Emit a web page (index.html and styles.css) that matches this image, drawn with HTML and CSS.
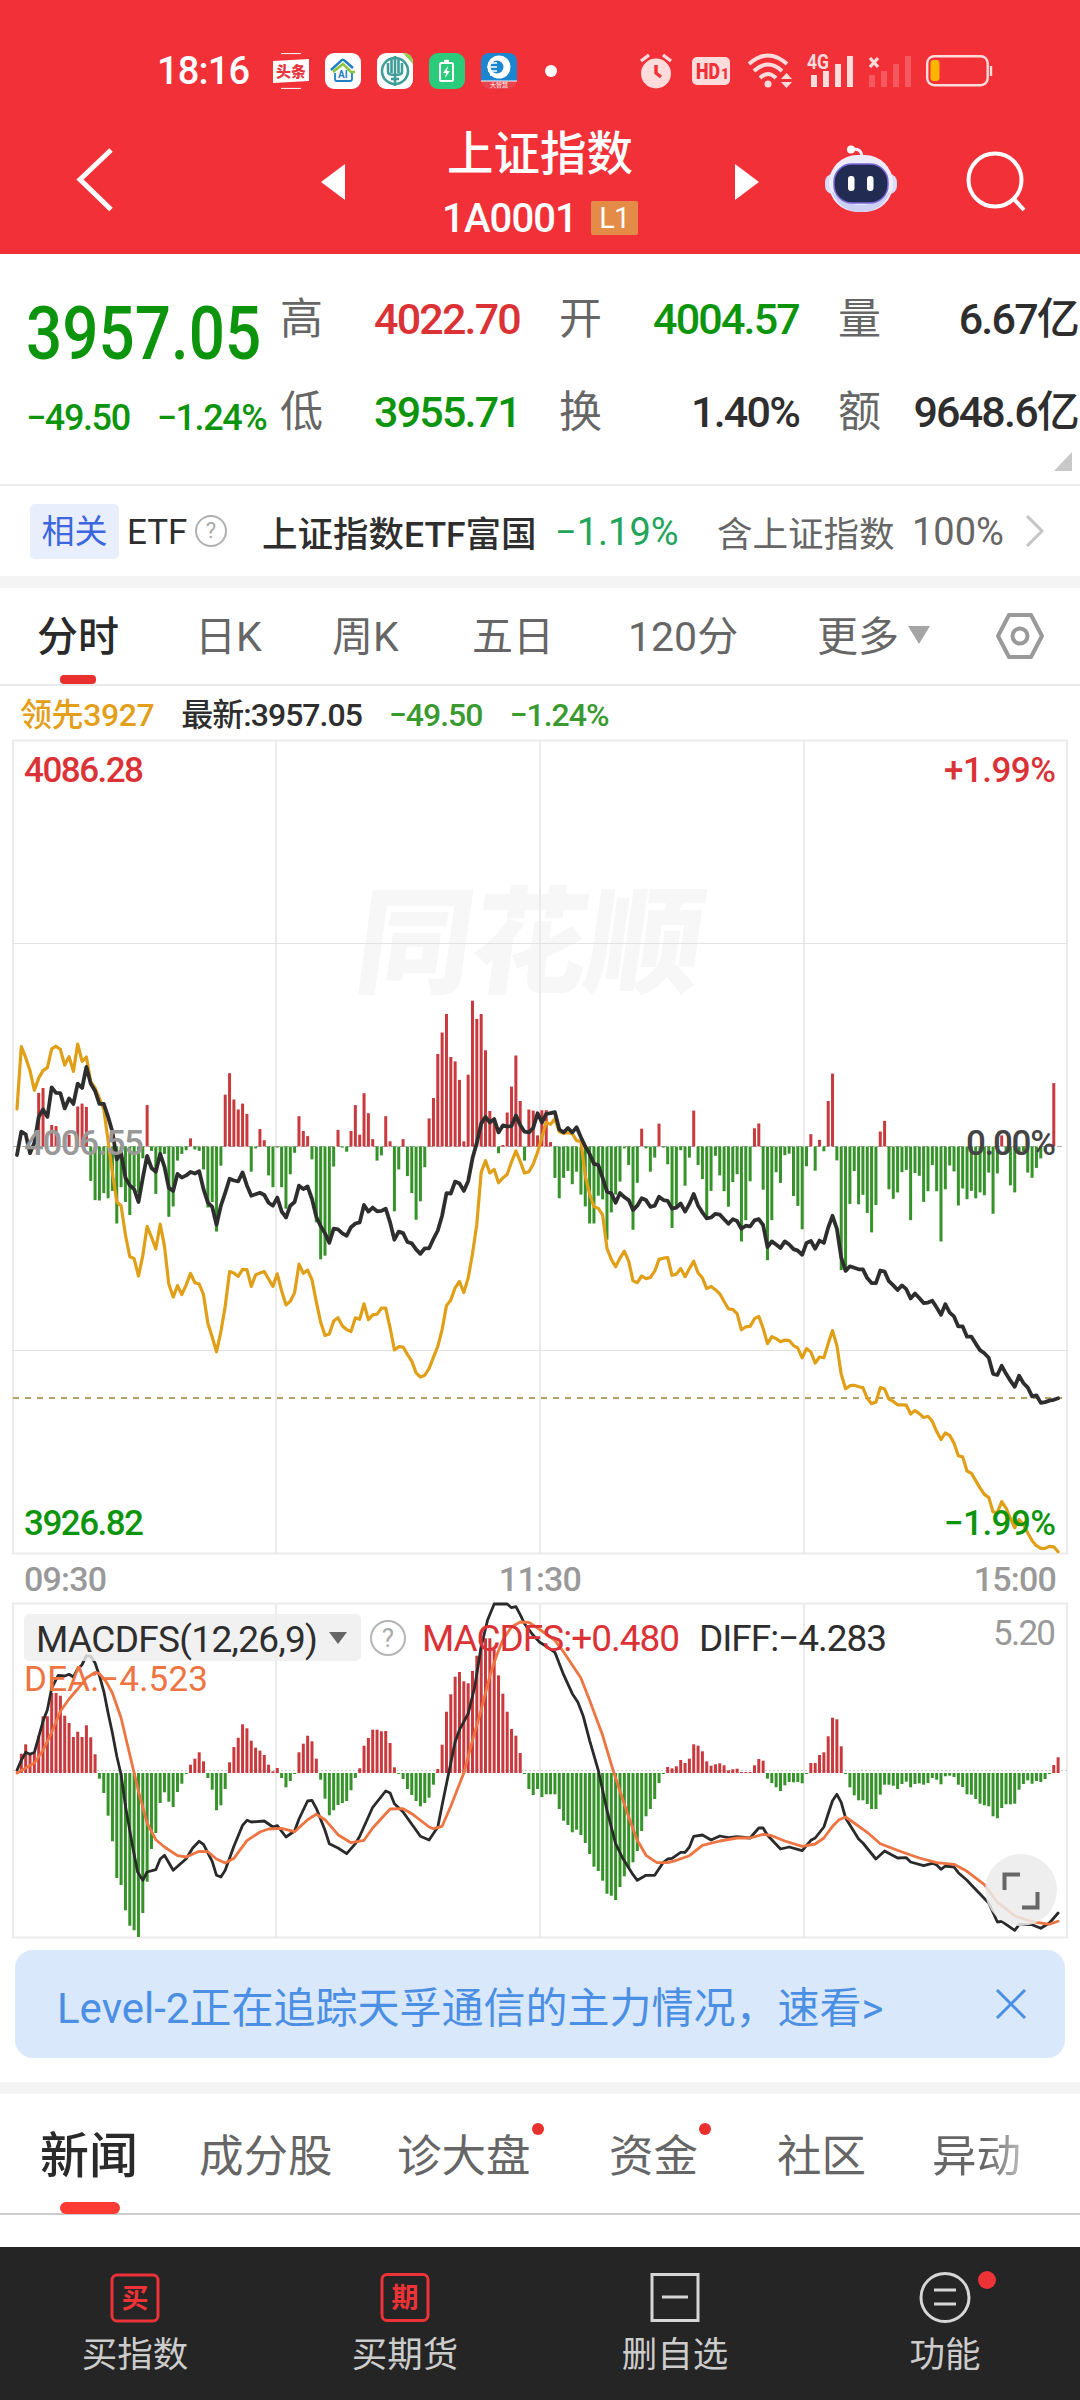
FILE: index.html
```html
<!DOCTYPE html>
<html lang="zh-CN">
<head>
  <meta charset="utf-8">
  <title>上证指数</title>
  <link rel="stylesheet" href="styles.css">
</head>
<body>
  <header class="top">
    <div class="status-bar">
      <span class="clock">18:16</span>
      <div class="app-icons">
        <svg width="36" height="36" viewBox="0 0 36 36"><path d="M8 .6H28M8 35.4H28" stroke="#fff" stroke-width="1"/><path d="M0 8L36 6V28L0 30Z" fill="#fff"/><text x="3" y="24" class="toutiao">头条</text></svg>
        <svg width="36" height="36" viewBox="0 0 36 36"><rect width="36" height="36" rx="9" fill="#fff"/><path d="M6 17L17 7Q18 6 20 8L28 15" fill="none" stroke="#1f7fc4" stroke-width="2.4"/><path d="M8 19L18 11L26 19H30" fill="none" stroke="#8cc63f" stroke-width="2.6"/><path d="M10 20V26Q10 28 12 28H25Q27 28 27 26V20" fill="none" stroke="#1f7fc4" stroke-width="1.8"/><text x="13" y="25" class="ai">AI</text></svg>
        <svg width="36" height="36" viewBox="0 0 36 36"><rect width="36" height="36" rx="9" fill="#fff"/><path d="M26 0Q36 0 36 11Z" fill="#8ccf4d"/><circle cx="18" cy="18" r="13" fill="none" stroke="#3f9f98" stroke-width="2.6"/><path d="M18 3V33M11 10V19Q11 22 18 22Q25 22 25 19V10M14.5 6V20M21.500 6V20M14 26H22" fill="none" stroke="#3f9f98" stroke-width="2.6"/></svg>
        <svg width="36" height="36" viewBox="0 0 36 36"><rect width="36" height="36" rx="9" fill="#2bcb7c"/><rect x="11" y="10" width="13" height="18" rx="1.500" fill="none" stroke="#fff" stroke-width="2"/><path d="M15 8H20" stroke="#fff" stroke-width="2.400"/><path d="M19 13L14 20H17L16 25L21 18H18Z" fill="#fff"/></svg>
        <svg width="36" height="36" viewBox="0 0 36 36"><rect width="36" height="36" rx="9" fill="#e8444c"/><path d="M0 28V9Q0 0 9 0H27Q36 0 36 9V28Z" fill="#1b86cf"/><path d="M0 28H36" stroke="#fff" stroke-width="1"/><circle cx="18" cy="14" r="11.500" fill="#fff"/><circle cx="16" cy="14" r="6.500" fill="#1b86cf"/><path d="M7 10H16M6 14H16M7 18H16M9 22H17" stroke="#fff" stroke-width="1.600"/><text x="9" y="34" class="tiny">大智慧</text></svg>
      </div>
      <i class="more-dot"></i>
      <div class="sys-icons">
        <svg width="32" height="36" viewBox="0 0 32 36" fill="none" stroke="#ffdcdc"><circle cx="16" cy="20.500" r="15" fill="#ffdcdc" stroke="none"/><path d="M1 8L9 2M31 8L23 2" stroke-width="3.400"/><path d="M16 12V20L21 24" stroke="#f13038" stroke-width="3.400"/></svg>
        <svg class="hd" width="38" height="28" viewBox="0 0 38 28"><rect width="38" height="28" rx="5" fill="#ffdcdc"/><text x="4" y="22" textLength="24" lengthAdjust="spacingAndGlyphs">HD</text><text x="29" y="22" class="hd-sub">1</text></svg>
        <svg class="wifi" width="46" height="36" viewBox="0 0 46 36" fill="none" stroke="#ffdcdc" stroke-width="4"><path d="M2 11Q21 -6 40 11M7 18Q21 5 35 18M13 25Q21 17 29 25"/><circle cx="21" cy="31" r="3.500" fill="#ffdcdc" stroke="none"/><path d="M34 26L39.500 20L45 26ZM34 29L39.500 35L45 29Z" fill="#ffdcdc" stroke="none"/></svg>
        <svg class="sig" width="47" height="36" viewBox="0 0 47 36" fill="#ffdcdc"><text x="0" y="16" textLength="22" lengthAdjust="spacingAndGlyphs" class="net">4G</text><rect x="4" y="22" width="6" height="12"/><rect x="16" y="18" width="6" height="16"/><rect x="28" y="11" width="6" height="23"/><rect x="40" y="3" width="6" height="31"/></svg>
        <svg class="sig2" width="44" height="36" viewBox="0 0 44 36"><path d="M2 5L10 14M10 5L2 14" stroke="#ffdcdc" stroke-width="3.200"/><g fill="#f5595f"><rect x="1" y="22" width="6" height="12"/><rect x="13" y="18" width="6" height="16"/><rect x="25" y="11" width="6" height="23"/><rect x="37" y="3" width="6" height="31"/></g></svg>
        <svg class="bat" width="67" height="32" viewBox="0 0 67 32"><rect x="1.200" y="1.200" width="60.500" height="29" rx="7" fill="none" stroke="#ffdcdc" stroke-width="2.400"/><path d="M65 11V21" stroke="#ffdcdc" stroke-width="2.400"/><rect x="4.500" y="5" width="9" height="21" rx="3" fill="#ffb400"/></svg>
      </div>
    </div>
    <div class="nav">
      <svg class="back" width="38" height="64" viewBox="0 0 38 64" fill="none" stroke="#fff" stroke-width="5"><path d="M35 2L4 31.500L35 61.500"/></svg>
      <svg width="24" height="36" viewBox="0 0 24 36"><path d="M24 0V36L0 18Z" fill="#fff"/></svg>
      <div class="title">
        <h1>上证指数</h1>
        <p>1A0001<span class="level">L1</span></p>
      </div>
      <svg width="24" height="36" viewBox="0 0 24 36"><path d="M0 0V36L24 18Z" fill="#fff"/></svg>
      <svg class="robot" width="72" height="68" viewBox="0 0 72 68">
        <path d="M26 5Q37 2 37 13" fill="none" stroke="#f4eefb" stroke-width="3"/><circle cx="26" cy="4.500" r="4" fill="#fff"/>
        <rect x="0" y="29" width="72" height="20" rx="8" fill="#d9dcfb"/>
        <rect x="4" y="10" width="64" height="57" rx="28" fill="#eeecfb"/>
        <path d="M6 45Q14 67 36 67T66 45Q54 60 36 60T6 45Z" fill="#ccd0f5"/>
        <rect x="9" y="19" width="54" height="39" rx="18" fill="#222c52" stroke="#7b68d8" stroke-width="1.500"/>
        <rect x="23" y="31" width="6.500" height="15" rx="3" fill="#fff"/><rect x="42" y="31" width="6.500" height="15" rx="3" fill="#fff"/>
      </svg>
      <svg class="search" width="62" height="62" viewBox="0 0 62 62" fill="none" stroke="#fff" stroke-width="4"><circle cx="29" cy="29" r="26.500"/><path d="M47 47L58 59"/></svg>
    </div>
  </header>

  <section class="quote">
    <div class="quote-main down">
      <strong>3957.05</strong>
      <p><span>−49.50</span><span>−1.24%</span></p>
    </div>
    <dl>
      <div><dt>高</dt><dd class="up">4022.70</dd></div>
      <div><dt>开</dt><dd class="down">4004.57</dd></div>
      <div><dt>量</dt><dd>6.67亿</dd></div>
      <div><dt>低</dt><dd class="down">3955.71</dd></div>
      <div><dt>换</dt><dd>1.40%</dd></div>
      <div><dt>额</dt><dd>9648.6亿</dd></div>
    </dl>
    <i class="corner"></i>
  </section>

  <section class="etf">
    <span class="tag">相关</span>
    <span class="etf-label">ETF</span>
    <i class="help">?</i>
    <span class="etf-name">上证指数ETF富国</span>
    <span class="etf-chg">−1.19%</span>
    <span class="etf-note">含上证指数</span>
    <span class="etf-pct">100%</span>
    <svg width="20" height="32" viewBox="0 0 20 32" fill="none" stroke="#c4c4c4" stroke-width="3"><path d="M2 1L17 16L2 31"/></svg>
  </section>

  <nav class="periods">
    <a class="active">分时</a>
    <a>日K</a>
    <a>周K</a>
    <a>五日</a>
    <a>120分</a>
    <a class="more">更多<i></i></a>
    <svg width="50" height="48" viewBox="0 0 50 48" fill="none" stroke="#999" stroke-width="4"><path d="M14 3H36L47 24L36 45H14L3 24Z" stroke-linejoin="round"/><circle cx="25" cy="24" r="7.500"/></svg>
  </nav>

  <div class="latest">
    <span class="lead">领先3927</span>
    <span>最新:3957.05</span>
    <span class="down2">−49.50</span>
    <span class="down2">−1.24%</span>
  </div>

  <svg id="trend" class="chart" width="1080" height="815" viewBox="0 0 1080 815">
    <text class="watermark" x="356" y="244" textLength="346" transform="skewX(-8) translate(30 0)">同花顺</text>
    <path class="grid" d="M13 .5H1067V813.500H13ZM276 .5V813.500M540 .5V813.500M804 .5V813.500"/>
    <path class="grid thin" d="M13 203.500H1067M13 610.500H1067"/>
    <path d="M13 406.500H1062" stroke="#aaa" stroke-dasharray="6 3"/>
    <path d="M13 658H1062" stroke="#b5a06a" stroke-width="2" stroke-dasharray="6 6"/>
    <g class="bars"></g>
    <g class="lines"></g>
    <text x="24" y="42" textLength="120" class="t up">4086.28</text>
    <text x="1056" y="42" textLength="112" class="t up end">+1.99%</text>
    <text x="24" y="415" textLength="120" class="t mid">4006.55</text>
    <text x="1056" y="415" textLength="90" class="t zero end">0.00%</text>
    <text x="24" y="795" textLength="120" class="t down">3926.82</text>
    <text x="1056" y="795" textLength="112" class="t down end">−1.99%</text>
  </svg>

  <div class="times"><span>09:30</span><span>11:30</span><span>15:00</span></div>

  <div class="macd">
    <svg id="macd" class="chart" width="1080" height="336" viewBox="0 0 1080 336">
      <path class="grid" d="M13 .5H1067V334.500H13ZM276 .5V334.500M540 .5V334.500M804 .5V334.500"/>
      <path d="M13 167.500H1067" stroke="#ccc" stroke-dasharray="2 2"/>
      <g class="bars"></g>
      <g class="lines"></g>
      <rect x="24" y="11" width="337" height="47" rx="5" fill="#eee" fill-opacity=".82"/>
      <text x="36" y="49" textLength="282" class="t ind">MACDFS(12,26,9)</text>
      <path d="M329 29H347L338 41Z" fill="#666"/>
      <circle cx="388" cy="35" r="17" fill="none" stroke="#b5b5b5" stroke-width="2"/>
      <text x="388" y="44" class="q">?</text>
      <text x="422" y="48" textLength="258" class="t macd-up">MACDFS:+0.480</text>
      <text x="699" y="48" textLength="188" class="t ind">DIFF:−4.283</text>
      <text x="1056" y="42" textLength="63" class="t gray end">5.20</text>
      <text x="24" y="88" textLength="184" class="t dea">DEA:−4.523</text>
      <circle cx="1021" cy="287" r="36" fill="#ebebeb" fill-opacity=".85"/>
      <path d="M1004.500 287V271.500H1020M1037.500 289V304.500H1022" fill="none" stroke="#666" stroke-width="4"/>
    </svg>
  </div>

  <div class="banner">
    <span>Level-2正在追踪天孚通信的主力情况，速看&gt;</span>
    <svg width="32" height="32" viewBox="0 0 32 32" stroke="#4a8fe4" stroke-width="3"><path d="M2 2L30 30M30 2L2 30"/></svg>
  </div>

  <nav class="news-tabs">
    <a class="active">新闻</a>
    <a>成分股</a>
    <a class="dot">诊大盘</a>
    <a class="dot">资金</a>
    <a>社区</a>
    <a class="fade">异动</a>
  </nav>

  <footer class="actions">
    <a>
      <svg width="50" height="50" viewBox="0 0 50 50"><rect x="2" y="2" width="46" height="46" rx="5" fill="none" stroke="#ee3338" stroke-width="3"/><text x="25" y="35" class="glyph">买</text></svg>
      <span>买指数</span>
    </a>
    <a>
      <svg width="50" height="50" viewBox="0 0 50 50"><rect x="2" y="1.500" width="46" height="46" rx="5" fill="none" stroke="#ee3338" stroke-width="3"/><text x="25" y="34" class="glyph">期</text></svg>
      <span>买期货</span>
    </a>
    <a>
      <svg width="50" height="50" viewBox="0 0 50 50" fill="none" stroke="#d6d6d6" stroke-width="3"><rect x="2" y="1.500" width="46" height="46"/><path d="M12 24H38"/></svg>
      <span>删自选</span>
    </a>
    <a class="badge">
      <svg width="52" height="52" viewBox="0 0 52 52" fill="none" stroke="#d6d6d6" stroke-width="3"><circle cx="26" cy="25.500" r="24"/><path d="M15 18H37M15 32H37"/></svg>
      <span>功能</span>
    </a>
  </footer>

  <script src="charts.js"></script>
</body>
</html>
```
FILE: styles.css
```css
* {
  box-sizing: border-box;
}

body {
  width: 1080px;
  height: 2400px;
  margin: 0;
  display: flex;
  flex-direction: column;
  overflow: hidden;
  background: #fff;
  color: #2e2e2e;
  font-family: Roboto, "Noto Sans CJK SC", sans-serif;
}

h1, p, dl, dd {
  margin: 0;
}

svg {
  display: block;
  flex: none;
  overflow: visible;
}

.up { color: #db3236; fill: #db3236; }
.down { color: #0c940c; fill: #0c940c; }
.down2 { color: #3a9a30; }

/* header */
.top {
  height: 254px;
  background: #f13038;
  color: #fff;
}

.status-bar {
  display: flex;
  align-items: center;
  height: 142px;
  padding: 0 87px 0 157px;
}

.clock {
  width: 117px;
  font-size: 38px;
  font-weight: 500;
  letter-spacing: -.8px;
}

.app-icons {
  display: flex;
  gap: 16px;
}

.more-dot {
  width: 12px;
  height: 12px;
  margin-left: 28px;
  border-radius: 50%;
  background: #fff;
}

.sys-icons {
  display: flex;
  align-items: center;
  margin-left: 83px;
}

.hd { margin-left: 20px; }
.wifi { margin-left: 17px; }
.sig { margin-left: 14px; }
.sig2 { margin-left: 14px; }
.bat { margin-left: 14px; }

.hd text { font-size: 22px; font-weight: 900; fill: #f13038; }
.hd .hd-sub { font-size: 14px; }
.net { font-size: 20px; font-weight: 700; }
.toutiao { font-size: 15px; font-weight: 900; fill: #e8343c; }
.ai { font-size: 10px; font-weight: 700; fill: #1f7fc4; }
.tiny { font-size: 6px; fill: #fff; }

.nav {
  display: flex;
  align-items: center;
  height: 80px;
  padding-left: 76px;
}

.back {
  margin-right: 207px;
  margin-top: -4px;
}

.title {
  width: 390px;
  padding-top: 7px;
  text-align: center;
}

.title h1 {
  font-size: 46.500px;
  font-weight: 500;
  line-height: 65px;
}

.title p {
  display: flex;
  align-items: center;
  justify-content: center;
  gap: 14px;
  font-size: 40px;
  font-weight: 500;
  line-height: 63px;
  letter-spacing: -.9px;
}

.level {
  width: 47px;
  height: 34px;
  border-radius: 2px;
  background: #e48b47;
  font-size: 29px;
  font-weight: 400;
  line-height: 34px;
}

.robot { margin-left: 66px; margin-top: -7px; }
.search { margin-left: 69px; }

/* quote */
.quote {
  position: relative;
  display: flex;
  height: 232px;
  padding: 19px 1px 0 26px;
  border-bottom: 2px solid #ececec;
}

.quote-main {
  width: 254px;
}

.quote-main strong {
  display: block;
  width: 274px;
  font-size: 75px;
  font-weight: 500;
  line-height: 120px;
  transform: scaleX(.85);
  transform-origin: left;
}

.quote-main p {
  display: flex;
  gap: 27px;
  font-size: 36px;
  font-weight: 500;
  line-height: 50px;
  letter-spacing: -1.400px;
  white-space: nowrap;
}

.quote dl {
  display: grid;
  grid-template-columns: repeat(3, 240px);
  grid-auto-rows: 93px;
  column-gap: 39px;
}

.quote dl div {
  display: flex;
  justify-content: space-between;
  font-size: 43px;
  line-height: 93px;
  white-space: nowrap;
}

.quote dt {
  color: #666;
}

.quote dd {
  font-weight: 500;
  letter-spacing: -1.800px;
}

.corner {
  position: absolute;
  right: 8px;
  bottom: 13px;
  border-left: 18px solid transparent;
  border-bottom: 19px solid #c8c8c8;
}

/* related etf */
.etf {
  display: flex;
  align-items: center;
  height: 90px;
  padding-left: 30px;
  font-size: 35.500px;
  white-space: nowrap;
}

.tag {
  width: 89px;
  height: 55px;
  margin-right: 8px;
  border-radius: 5px;
  background: #e8eefc;
  color: #3c66de;
  font-size: 33px;
  line-height: 56px;
  text-align: center;
}

.etf-label {
  width: 68px;
  padding-top: 2px;
  font-size: 35px;
}

.help {
  width: 32px;
  height: 32px;
  margin-right: 35px;
  border: 2px solid #b0b0b0;
  border-radius: 50%;
  color: #aaa;
  font-size: 22px;
  font-style: normal;
  line-height: 28px;
  text-align: center;
}

.etf-name { width: 293px; font-weight: 500; }
.etf-chg { width: 162px; padding-top: 2px; color: #22a55b; font-size: 38px; }
.etf-note { width: 195px; color: #666; }
.etf-pct { width: 113px; padding-top: 2px; color: #666; font-size: 38px; }

/* period tabs */
.periods {
  display: flex;
  align-items: center;
  height: 110px;
  padding-left: 37px;
  border-top: 12px solid #f4f4f4;
  border-bottom: 2px solid #e8e8e8;
  color: #666;
  font-size: 41px;
  white-space: nowrap;
}

.periods a {
  position: relative;
  height: 96px;
  line-height: 99px;
}

.periods a:nth-child(1) { width: 158px; }
.periods a:nth-child(2) { width: 137px; }
.periods a:nth-child(3) { width: 140px; }
.periods a:nth-child(4) { width: 156px; }
.periods a:nth-child(5) { width: 189px; }
.periods a:nth-child(6) { width: 178px; }

.periods .active {
  color: #2a2a2a;
  font-weight: 500;
}

.periods .active::after {
  content: "";
  position: absolute;
  left: 23px;
  bottom: 0;
  width: 36px;
  height: 9px;
  border-radius: 4px;
  background: #e8302f;
}

.more i {
  display: inline-block;
  margin: 0 0 7px 9px;
  border: 11px solid transparent;
  border-top: 18px solid #a5a5a5;
  border-bottom: 0;
}

.latest {
  display: flex;
  height: 54px;
  padding-left: 20px;
  gap: 27px;
  font-size: 32px;
  font-weight: 500;
  line-height: 58px;
  letter-spacing: -.4px;
}

.latest span {
  letter-spacing: -1px;
}

.latest .lead {
  color: #e39f1a;
  letter-spacing: -.4px;
}

/* charts */
.grid { fill: none; stroke: #ebebeb; stroke-width: 2; }
.thin { stroke: #e2e2e2; stroke-width: 1; }
.line { fill: none; stroke-linejoin: round; stroke-linecap: round; }
.t { font-size: 35px; font-weight: 500; }
.end { text-anchor: end; }
.mid { fill: #999; }
.gray { fill: #999; font-weight: 400; }
.zero { fill: #444; }
.ind { fill: #2e2e2e; font-size: 37px; font-weight: 400; }
.macd-up { fill: #db3236; font-size: 37px; font-weight: 400; }
.dea { fill: #ee7441; font-weight: 400; }
.q { fill: #aaa; font-size: 26px; text-anchor: middle; }

.watermark {
  fill: #f7f7f7;
  font-family: "Noto Sans CJK SC", sans-serif;
  font-size: 116px;
  font-weight: 900;
}

.times {
  display: flex;
  justify-content: space-between;
  height: 48px;
  padding: 0 24px;
  color: #999;
  font-size: 34px;
  font-weight: 500;
  line-height: 48px;
  letter-spacing: -.8px;
}

.banner {
  display: flex;
  flex: none;
  align-items: center;
  justify-content: space-between;
  height: 108px;
  margin: 11px 15px 24px;
  padding: 0 38px 0 42px;
  border-radius: 18px;
  background: #dae8fb;
  color: #4a8fe4;
  font-size: 42px;
}

/* news */
.news-tabs {
  display: flex;
  flex: none;
  height: 133px;
  padding-left: 40px;
  border-top: 12px solid #f4f4f4;
  border-bottom: 2px solid #ccc;
  color: #666;
  font-size: 44.500px;
  line-height: 126px;
  white-space: nowrap;
}

.news-tabs a {
  position: relative;
  height: 120px;
}

.news-tabs a:nth-child(1) { width: 159px; }
.news-tabs a:nth-child(2) { width: 198px; }
.news-tabs a:nth-child(3) { width: 212px; }
.news-tabs a:nth-child(4) { width: 168px; }
.news-tabs a:nth-child(5) { width: 155px; }

.news-tabs .active {
  color: #2a2a2a;
  font-size: 49px;
  font-weight: 500;
}

.news-tabs .active::after {
  content: "";
  position: absolute;
  left: 20px;
  bottom: 0;
  width: 60px;
  height: 12px;
  border-radius: 6px;
  background: #fd3a33;
}

.dot::after {
  content: "";
  position: absolute;
  top: 29px;
  left: 135px;
  width: 12px;
  height: 12px;
  border-radius: 50%;
  background: #e8302f;
}

.dot:nth-child(4)::after { left: 90px; }

.fade {
  background: linear-gradient(90deg, #666 60%, #bbb);
  background-clip: text;
  color: transparent;
}

.actions {
  display: grid;
  grid-template-columns: repeat(4, 1fr);
  flex: none;
  height: 153px;
  margin-top: auto;
  background: #252525;
  color: #ccc;
  font-size: 35.500px;
}

.actions a {
  position: relative;
  display: flex;
  flex-direction: column;
  align-items: center;
  padding-top: 25px;
}

.actions svg {
  height: 52px;
}

.actions span {
  line-height: 63px;
}

.glyph {
  fill: #ee3338;
  font-size: 27px;
  font-weight: 700;
  text-anchor: middle;
}

.badge::after {
  content: "";
  position: absolute;
  top: 24px;
  left: 168px;
  width: 18px;
  height: 18px;
  border-radius: 50%;
  background: #ee3338;
}
```
FILE: charts.js
```javascript
const NS = 'http://www.w3.org/2000/svg';
const START = 17;
const STEP = 4.338;

const RED = '#c93a3e';
const GREEN = '#36932a';

function add(parent, name, attrs) {
  const el = document.createElementNS(NS, name);
  for (const k in attrs) el.setAttribute(k, attrs[k]);
  parent.appendChild(el);
}

function drawBars(svg, values, zero) {
  const g = svg.querySelector('.bars');
  values.forEach((v, i) => {
    if (!v) return;
    const h = Math.max(Math.abs(v), 1);
    add(g, 'rect', {
      x: (START + i * STEP - 1.5).toFixed(2),
      y: (v > 0 ? zero - h : zero).toFixed(1),
      width: 3,
      height: h.toFixed(1),
      fill: v > 0 ? RED : GREEN
    });
  });
}

// points: [minute, value]
function drawLine(svg, points, zero, color, width) {
  add(svg.querySelector('.lines'), 'polyline', {
    class: 'line',
    points: points.map(([i, v]) => (START + i * STEP).toFixed(1) + ',' + (zero - v).toFixed(1)).join(' '),
    stroke: color,
    'stroke-width': width
  });
}

const scale = (values, k) => values.map(v => v * k);
const index = values => values.map((v, i) => [i, v]);

// one value per minute, 09:30 - 15:00
const strength = [
  ...scale([
    0,0,0,0,0,145,158,0,58,55,0,0,32,0,108,116,107,-93,-145,-146,-126,-140,-120,-208,-110,-150,-185,-110,-125,-32,
    112,-12,-128,-30,-20,-190,-162,-38,-20,-10,22,-8,-12,-62,-165,-150,-230,-52,140,198,127,100,116,88,-68,-5,47,17,-78,-110,
    -2,-110,-168,-75,-17,82,42,28,-35,-205,-305,-295,-245,-54,45,-3,-14,42,112,32,144,90,20,-38,-24,82,14,-175,-62,20,
    -80,-126,-198,-148,-56,76,131,250,308,358,242,230,180,14,194,394,345,358,260,96,72,-18,4,92,162,246,123,-38,100,97,
    30,98,98,12,-85,-140,-85,-66,-102,-68,-130,-162,-208,-208,-133,-143,-252,-178,-130,-95,-5,-50,-225,-98,48,-5,-68,-30,62,-3,
    -48,-220,-165,-10,-106,-30,97,-50,-88,-190,-120,-25,-78
  ], 0.37),
  ...scale([
    -113,-152,-90,-70,-240,-186,-88,46,58,-109,-287,-186,-65,-92,-22,-18,-125,-150,-209,-50,31,-61,17,-12,115,184,-35,
    -312,-312,-145,-62,-146,-122,-168,-217,-148,38,65,-108,-132,-116,-65,-59,-186,-67,-74,-140,-113,-47,-113,-240,-108,-48,-63,
    -149,-106,-133,-112,-131,-116,-123,-66,-170,-68,28,-17,-98,-116,-15,-12,-66,-79,-54,-30,-12,2,160
  ], 0.396)
];

const price = [
  ...scale([
    -23,40,33,-18,10,80,100,80,160,145,144,103,130,115,170,158,215,170,150,115,115,80,40,-35,-18,-85,-105,-115,-150,-85,
    -25,-58,-68,-20,-55,-112,-120,-74,-84,-78,-69,-73,-67,-115,-152,-163,-212,-160,-125,-87,-92,-94,-70,-105,-133,-129,-125,-131,-152,-160,
    -138,-175,-192,-160,-150,-106,-115,-108,-142,-190,-215,-235,-260,-222,-224,-235,-241,-218,-208,-205,-158,-176,-165,-175,-174,-168,-205,-252,-230,-234,
    -258,-262,-278,-290,-275,-275,-250,-227,-187,-126,-127,-95,-100,-120,-93,-32,10,62,80,65,74,38,57,54,55,84,58,40,38,50,
    90,65,88,90,93,46,38,50,38,52,25,0,-20,-47,-50,-85,-122,-126,-152,-126,-137,-145,-172,-160,-140,-145,-163,-160,-136,-145,
    -147,-168,-165,-154,-176,-155,-128,-160,-178,-194,-192,-182,-184
  ], 0.37),
  ...scale([
    -190,-202,-190,-195,-215,-207,-209,-193,-190,-205,-263,-248,-256,-265,-248,-256,-268,-272,-283,-252,-247,-267,-246,-252,-212,-181,-215,
    -290,-325,-313,-317,-321,-321,-344,-357,-357,-324,-327,-352,-363,-375,-363,-373,-397,-384,-396,-409,-408,-403,-421,-440,-412,-434,-444,
    -470,-470,-497,-497,-515,-532,-540,-552,-594,-597,-573,-594,-612,-628,-599,-618,-630,-653,-650,-670,-668,-664,-662,-658
  ], 0.3827)
];

const lead = [
  ...scale([
    102,270,240,205,152,185,205,213,264,271,262,220,243,203,277,230,242,175,158,130,100,15,-70,-150,-160,-240,-298,-303,-350,-295,
    -216,-245,-277,-210,-270,-372,-407,-376,-400,-374,-343,-368,-372,-400,-478,-515,-555,-500,-432,-338,-342,-351,-332,-333,-378,-347,-342,-338,-358,-378,
    -344,-390,-428,-418,-395,-318,-343,-334,-360,-420,-475,-511,-507,-472,-463,-485,-495,-500,-463,-467,-425,-468,-455,-453,-437,-437,-490,-550,-541,-542,
    -562,-580,-612,-623,-618,-600,-570,-540,-495,-430,-415,-382,-365,-395,-355,-290,-210,-70,-38,-72,-62,-98,-85,-75,-42,-12,-40,-72,-68,-48,
    -15,25,65,60,75,40,36,37,35,16,14,-80,-128,-163,-167,-185,-275,-305,-325,-302,-283,-310,-363,-368,-350,-357,-354,-337,-305,-302,
    -300,-348,-345,-330,-352,-330,-310,-342,-355,-384,-378,-387,-398
  ], 0.37),
  ...scale([
    -405,-424,-426,-437,-479,-471,-470,-450,-444,-475,-515,-497,-502,-510,-506,-507,-520,-527,-552,-528,-537,-566,-550,-552,-515,-481,-520,
    -595,-633,-625,-624,-628,-630,-658,-672,-668,-630,-634,-660,-666,-675,-675,-676,-699,-690,-698,-708,-705,-718,-745,-766,-748,-755,-775,
    -808,-811,-848,-854,-873,-892,-909,-917,-955,-956,-928,-945,-972,-996,-975,-988,-1010,-1030,-1043,-1050,-1050,-1045,-1046,-1059
  ], 0.3827)
];

const macd = scale([
  0,58,86,56,60,112,170,170,240,240,232,172,150,108,124,108,143,107,56,-17,-60,-128,-205,-315,-336,-412,-458,-472,-492,-420,
  -326,-228,-180,-90,-58,-86,-102,-57,-32,-3,25,43,62,35,-15,-50,-112,-97,-48,32,78,106,146,134,97,76,67,54,25,5,
  15,-15,-43,-24,-2,62,88,112,95,43,-20,-77,-127,-112,-96,-90,-84,-52,-15,14,82,105,130,130,125,126,90,17,-2,-18,
  -48,-66,-84,-100,-90,-74,-35,12,85,184,236,289,303,275,269,306,352,375,404,404,370,293,238,184,132,112,60,-2,-48,-66,
  -48,-72,-64,-64,-64,-108,-143,-156,-178,-170,-186,-210,-243,-281,-294,-323,-362,-368,-381,-342,-310,-282,-268,-234,-174,-130,-108,-78,-30,-3,
  18,14,20,39,30,43,86,82,65,35,22,26,29,23,8,11,13,2,2,2,23,42,37,-17,-30,-43,-54,-37,-27,-28,
  -27,-31,-2,30,30,54,62,110,166,161,80,-3,-43,-67,-82,-82,-93,-108,-108,-65,-35,-35,-38,-48,-33,-26,-43,-33,-31,-35,
  -30,-15,-20,-34,-10,-8,-12,-35,-42,-64,-65,-78,-92,-97,-100,-130,-136,-105,-94,-94,-92,-50,-33,-22,-32,-24,-27,-18,-2,24,47
], 1 / 3);

const diff = [
  [0,8],[1,38],[2,62],[3,56],[4,62],[6,155],[7,190],[8,255],[9.5,293],[11,291],[12,296],[13,288],[14,312],[15,325],[16,352],[17,350],[18,330],[19,292],
  [20,245],[21,180],[22,120],[23,50],[24,-5],[25,-100],[26.6,-217],[27.8,-297],[29,-322],[30,-297],[32,-290],[33,-258],[34,-247],[36,-292],[39,-257],
  [40.5,-225],[42,-205],[43,-214],[45,-265],[46,-307],[47,-312],[48,-292],[50,-220],[52,-157],[53,-142],[54,-147],[57,-144],[59,-162],[60,-158],
  [62,-192],[64,-174],[65,-138],[67,-84],[68,-82],[69,-106],[71,-172],[72,-212],[74,-225],[76,-242],[78,-212],[79,-190],[82,-103],[85,-54],[86,-60],
  [87,-92],[89,-117],[93,-190],[95,-201],[97,-162],[98,-97],[99,-32],[101,93],[102,130],[104,178],[105.5,258],[107,380],[108.5,460],[110,507],
  [113,507],[114,496],[115,499],[116,475],[117,448],[119,413],[120.5,392],[122,380],[124,362],[126,295],[128,238],[129.3,212],[130.5,172],[132,98],
  [134,8],[136,-112],[138,-212],[139.6,-255],[142,-305],[143,-322],[145,-307],[147,-307],[149,-268],[150,-258],[151,-256],[153,-238],[154,-238],
  [155,-222],[156,-190],[158,-186],[160,-201],[162,-189],[164,-194],[166,-191],[169,-195],[171,-165],[172,-165],[173,-187],[176,-228],[178,-222],
  [181,-233],[183,-202],[184,-195],[186,-162],[187,-122],[188,-83],[189,-64],[190,-88],[191,-135],[194,-198],[195,-210],[198,-258],[200,-234],
  [203,-255],[205,-254],[206,-267],[209,-278],[211,-271],[212,-276],[213,-289],[214,-279],[216,-282],[217,-299],[219,-322],[220,-336],[224,-390],
  [226,-447],[227,-445],[230,-472],[231,-455],[234,-455],[236,-466],[238,-450],[239,-435],[240,-420]
];

const dea = [
  [0,0],[4,30],[6,68],[8,122],[10,185],[12,222],[14,252],[16,285],[18,302],[19,298],[20.5,275],[22,240],[24,165],[26,55],[28,-55],[30,-150],[32,-200],
  [34,-222],[37,-248],[39,-252],[42,-235],[44,-236],[46,-258],[48,-270],[50,-256],[53,-203],[56,-177],[58,-168],[61,-166],[64,-176],[67,-140],[69,-124],
  [71,-140],[74,-185],[77,-209],[80,-202],[82,-165],[86,-108],[89,-107],[91,-122],[95,-162],[96,-167],[98,-160],[100,-100],[103,0],[105,98],[107,190],
  [109,290],[110.5,350],[112,400],[114,438],[116,453],[118,452],[120,435],[124,398],[126,363],[130,285],[132,218],[135,113],[137.6,0],[141,-132],
  [143,-202],[145,-247],[147.5,-269],[150,-269],[152,-262],[155,-248],[158,-217],[162,-204],[166,-195],[169,-195],[172,-184],[174,-188],[177,-204],
  [181,-220],[184,-213],[186,-195],[188,-160],[189.5,-140],[191,-132],[193,-150],[196,-178],[199,-212],[204,-237],[208,-255],[212,-269],[216,-274],
  [219,-295],[223,-335],[226,-388],[230,-428],[234,-446],[238,-454],[240,-445]
];

const third = points => points.map(([i, v]) => [i, v / 3]);

const trend = document.getElementById('trend');
drawBars(trend, strength, 406.5);
drawLine(trend, index(lead), 406.5, '#e09f17', 3.2);
drawLine(trend, index(price), 406.5, '#2e2e2e', 3.8);

const sub = document.getElementById('macd');
drawBars(sub, macd, 170);
drawLine(sub, third(diff), 170, '#2a2a2a', 2.8);
drawLine(sub, third(dea), 170, '#ee7441', 2.8);
```
